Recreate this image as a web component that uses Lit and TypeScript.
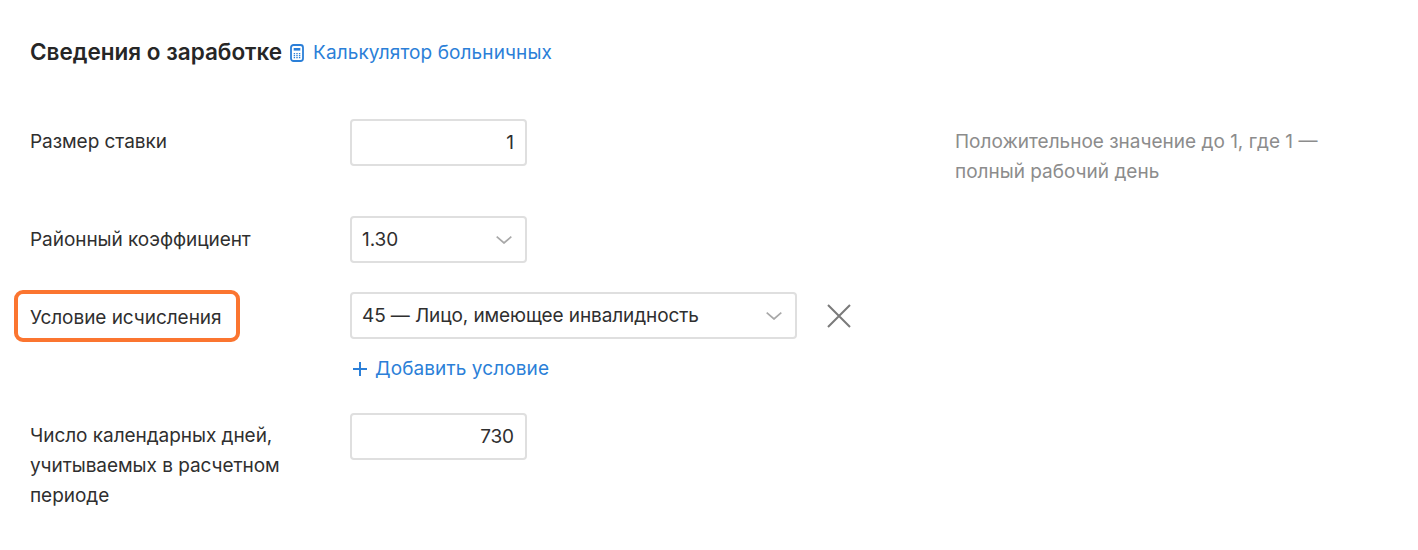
import { LitElement, html, css } from 'lit';
import { customElement } from 'lit/decorators.js';

const chevron = html`<svg width="16" height="8" viewBox="0 0 16 8" fill="none">
  <path d="M.7.7 8 7l7.3-6.3" stroke="#a8a8a8" stroke-width="1.7"/>
</svg>`;

@customElement('app-root')
export class AppRoot extends LitElement {
  static styles = css`
    :host {
      display: block;
      height: 550px;
      background: #fff;
      color: #2f2f2f;
      font-family: Inter, "Noto Sans", sans-serif;
      font-size: 19px;
      line-height: 30px;
      letter-spacing: -0.05px;
      overflow: hidden;
    }
    .page {
      padding: 37px 0 0 30px;
    }
    .title {
      display: flex;
      align-items: center;
      height: 30px;
      margin-bottom: 52px;
    }
    h2 {
      margin: 0;
      font-size: 22.5px;
      font-weight: 600;
      letter-spacing: 0;
      color: #262626;
    }
    a {
      color: #2b7fd8;
      text-decoration: none;
      letter-spacing: 0.1px;
    }
    .title a {
      padding: 2px 0 0 1px;
    }
    .title svg {
      margin: 1px 8px 0 8px;
    }
    .row {
      display: grid;
      grid-template-columns: 320px 605px 1fr;
      align-items: start;
    }
    .label {
      padding-top: 8px;
    }
    .region .label {
      padding-top: 9px;
    }
    .label.flagged {
      padding-top: 11px;
    }
    .field {
      box-sizing: border-box;
      height: 47px;
      width: 177px;
      border: 2px solid #dfdfdf;
      border-radius: 4px;
      display: flex;
      align-items: center;
      padding: 0 11px 0 10px;
      background: #fff;
      letter-spacing: -0.1px;
    }
    .field.number {
      justify-content: flex-end;
    }
    .field.select {
      justify-content: space-between;
      padding-right: 13px;
    }
    .field.wide {
      width: 447px;
    }
    .hint {
      color: #8c8c8c;
      padding-top: 8px;
      width: 400px;
      letter-spacing: 0;
    }
    .rate,
    .region,
    .condition {
      margin-bottom: 29px;
    }
    .control {
      display: flex;
      align-items: center;
      gap: 30px;
    }
    .marked {
      position: relative;
      display: inline-block;
    }
    .marked::before {
      content: '';
      position: absolute;
      inset: -13px -18px -9px -16px;
      border: 4px solid #fb7530;
      border-radius: 9px;
    }
    .add {
      display: flex;
      align-items: center;
      gap: 8px;
      margin: 15px 0 0 3px;
    }
  `;

  render() {
    return html`<div class="page">
      <div class="title">
        <h2>Сведения о заработке</h2>
        <svg width="14" height="18" viewBox="0 0 14 18" fill="none">
          <rect x="1" y="1" width="12" height="16" rx="2.5" stroke="#2b7fd8" stroke-width="1.8"/>
          <rect x="3.7" y="4" width="6.6" height="2.6" fill="#2b7fd8"/>
          <path d="M3.7 9.6h6.6M3.7 11.6h6.6M3.7 13.6h6.6" stroke="#2b7fd8" stroke-width="1.1" stroke-dasharray="1.4 1.2"/>
        </svg>
        <a href="#">Калькулятор больничных</a>
      </div>
      <div class="row rate">
        <div class="label">Размер ставки</div>
        <div class="field number">1</div>
        <div class="hint">Положительное значение до 1, где 1 — полный рабочий день</div>
      </div>
      <div class="row region">
        <div class="label">Районный коэффициент</div>
        <div class="field select">1.30 ${chevron}</div>
      </div>
      <div class="row condition">
        <div class="label flagged"><span class="marked">Условие исчисления</span></div>
        <div>
          <div class="control">
            <div class="field select wide">45 — Лицо, имеющее инвалидность ${chevron}</div>
            <svg width="24" height="24" viewBox="0 0 24 24" fill="none">
              <path d="M1 1l22 22M23 1 1 23" stroke="#7a7a7a" stroke-width="2"/>
            </svg>
          </div>
          <a class="add" href="#">
            <svg width="14" height="14" viewBox="0 0 14 14" fill="none">
              <path d="M7 0v14M0 7h14" stroke="#2b7fd8" stroke-width="2"/>
            </svg>
            Добавить условие
          </a>
        </div>
      </div>
      <div class="row">
        <div class="label">Число календарных дней,<br />учитываемых в расчетном<br />периоде</div>
        <div class="field number">730</div>
      </div>
    </div>`;
  }
}
